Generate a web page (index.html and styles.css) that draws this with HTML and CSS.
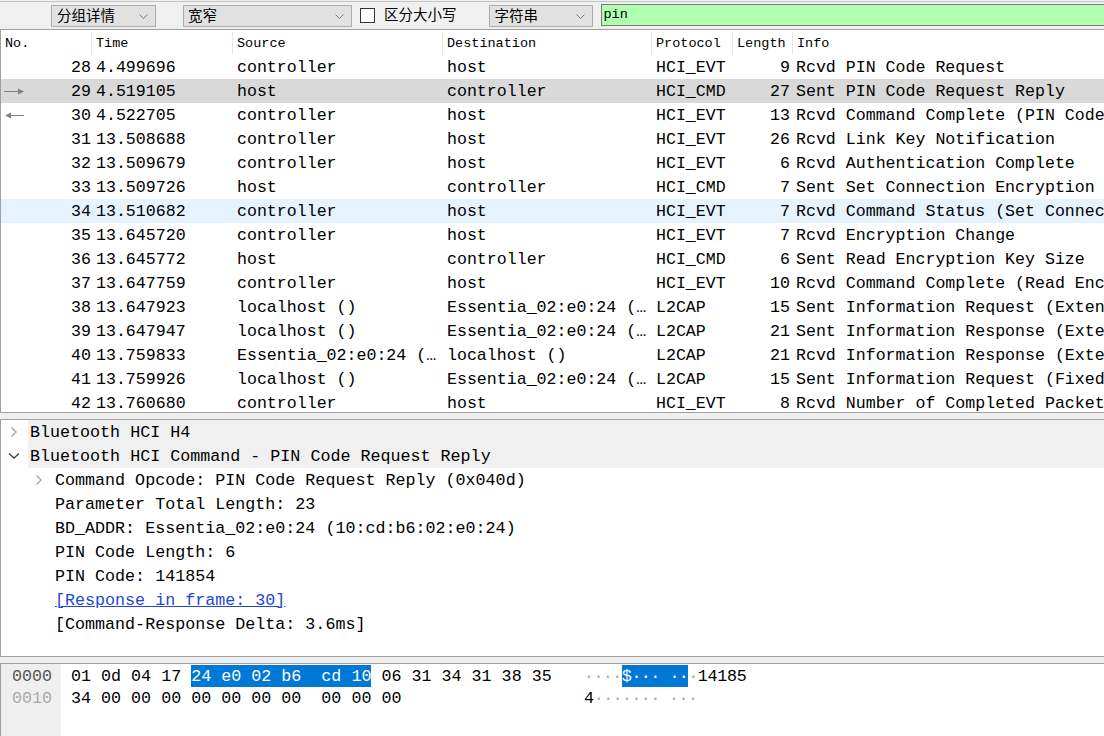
FILE: index.html
```html
<!DOCTYPE html>
<html lang="zh">
<head>
<meta charset="utf-8">
<title>Wireshark</title>
<link rel="stylesheet" href="styles.css">
</head>
<body>
<div class="app">
  <div class="toolbar">
    <div class="combo c1"><span>分组详情</span><svg class="chev" width="9" height="5" viewBox="0 0 9 5"><polyline points="0.5,0.5 4.5,4.5 8.5,0.5" fill="none" stroke="#7a7a7a" stroke-width="1"/></svg></div>
    <div class="combo c2"><span>宽窄</span><svg class="chev" width="9" height="5" viewBox="0 0 9 5"><polyline points="0.5,0.5 4.5,4.5 8.5,0.5" fill="none" stroke="#7a7a7a" stroke-width="1"/></svg></div>
    <div class="check"></div>
    <span class="check-label">区分大小写</span>
    <div class="combo c3"><span>字符串</span><svg class="chev" width="9" height="5" viewBox="0 0 9 5"><polyline points="0.5,0.5 4.5,4.5 8.5,0.5" fill="none" stroke="#7a7a7a" stroke-width="1"/></svg></div>
    <div class="search">pin</div>
  </div>

  <div class="plist">
    <div class="prow head">
      <div class="c sep">No.</div>
      <div class="c sep">Time</div>
      <div class="c sep">Source</div>
      <div class="c sep">Destination</div>
      <div class="c sep">Protocol</div>
      <div class="c sep">Length</div>
      <div class="c">Info</div>
    </div>
    <div class="prow"><div class="c no">28</div><div class="c">4.499696</div><div class="c">controller</div><div class="c">host</div><div class="c">HCI_EVT</div><div class="c len">9</div><div class="c info">Rcvd PIN Code Request</div></div>
    <div class="prow sel"><div class="c no"><svg width="22" height="7" viewBox="0 0 22 7"><line x1="1" y1="3.5" x2="20" y2="3.5" stroke="#808080" stroke-width="1"/><polygon points="15,0.5 21,3.5 15,6.5" fill="#808080"/></svg><span>29</span></div><div class="c">4.519105</div><div class="c">host</div><div class="c">controller</div><div class="c">HCI_CMD</div><div class="c len">27</div><div class="c info">Sent PIN Code Request Reply</div></div>
    <div class="prow"><div class="c no"><svg width="22" height="7" viewBox="0 0 22 7"><line x1="3" y1="3.5" x2="21" y2="3.5" stroke="#808080" stroke-width="1"/><polygon points="8,0.5 2,3.5 8,6.5" fill="#808080"/></svg><span>30</span></div><div class="c">4.522705</div><div class="c">controller</div><div class="c">host</div><div class="c">HCI_EVT</div><div class="c len">13</div><div class="c info">Rcvd Command Complete (PIN Code Request Reply)</div></div>
    <div class="prow"><div class="c no">31</div><div class="c">13.508688</div><div class="c">controller</div><div class="c">host</div><div class="c">HCI_EVT</div><div class="c len">26</div><div class="c info">Rcvd Link Key Notification</div></div>
    <div class="prow"><div class="c no">32</div><div class="c">13.509679</div><div class="c">controller</div><div class="c">host</div><div class="c">HCI_EVT</div><div class="c len">6</div><div class="c info">Rcvd Authentication Complete</div></div>
    <div class="prow"><div class="c no">33</div><div class="c">13.509726</div><div class="c">host</div><div class="c">controller</div><div class="c">HCI_CMD</div><div class="c len">7</div><div class="c info">Sent Set Connection Encryption</div></div>
    <div class="prow hover"><div class="c no">34</div><div class="c">13.510682</div><div class="c">controller</div><div class="c">host</div><div class="c">HCI_EVT</div><div class="c len">7</div><div class="c info">Rcvd Command Status (Set Connection Encryption)</div></div>
    <div class="prow"><div class="c no">35</div><div class="c">13.645720</div><div class="c">controller</div><div class="c">host</div><div class="c">HCI_EVT</div><div class="c len">7</div><div class="c info">Rcvd Encryption Change</div></div>
    <div class="prow"><div class="c no">36</div><div class="c">13.645772</div><div class="c">host</div><div class="c">controller</div><div class="c">HCI_CMD</div><div class="c len">6</div><div class="c info">Sent Read Encryption Key Size</div></div>
    <div class="prow"><div class="c no">37</div><div class="c">13.647759</div><div class="c">controller</div><div class="c">host</div><div class="c">HCI_EVT</div><div class="c len">10</div><div class="c info">Rcvd Command Complete (Read Encryption Key Size)</div></div>
    <div class="prow"><div class="c no">38</div><div class="c">13.647923</div><div class="c">localhost ()</div><div class="c">Essentia_02:e0:24 (10:cd:b6:02:e0:24)</div><div class="c">L2CAP</div><div class="c len">15</div><div class="c info">Sent Information Request (Extended Features Mask)</div></div>
    <div class="prow"><div class="c no">39</div><div class="c">13.647947</div><div class="c">localhost ()</div><div class="c">Essentia_02:e0:24 (10:cd:b6:02:e0:24)</div><div class="c">L2CAP</div><div class="c len">21</div><div class="c info">Sent Information Response (Extended Features Mask)</div></div>
    <div class="prow"><div class="c no">40</div><div class="c">13.759833</div><div class="c">Essentia_02:e0:24 (10:cd:b6:02:e0:24)</div><div class="c">localhost ()</div><div class="c">L2CAP</div><div class="c len">21</div><div class="c info">Rcvd Information Response (Extended Features Mask)</div></div>
    <div class="prow"><div class="c no">41</div><div class="c">13.759926</div><div class="c">localhost ()</div><div class="c">Essentia_02:e0:24 (10:cd:b6:02:e0:24)</div><div class="c">L2CAP</div><div class="c len">15</div><div class="c info">Sent Information Request (Fixed Channels Supported)</div></div>
    <div class="prow"><div class="c no">42</div><div class="c">13.760680</div><div class="c">controller</div><div class="c">host</div><div class="c">HCI_EVT</div><div class="c len">8</div><div class="c info">Rcvd Number of Completed Packets</div></div>
  </div>

  <div class="splitter"></div>

  <div class="details">
    <div class="drow l1"><span class="tw"><svg width="12" height="12" viewBox="0 0 12 12"><polyline points="3.5,1.5 8,6 3.5,10.5" fill="none" stroke="#a6a6a6" stroke-width="1.4"/></svg></span><span class="dt top">Bluetooth HCI H4</span></div>
    <div class="drow l1"><span class="tw"><svg width="12" height="12" viewBox="0 0 12 12"><polyline points="1,3.5 6,8 11,3.5" fill="none" stroke="#404040" stroke-width="1.4"/></svg></span><span class="dt top">Bluetooth HCI Command - PIN Code Request Reply</span></div>
    <div class="drow l2"><span class="tw"><svg width="12" height="12" viewBox="0 0 12 12"><polyline points="3.5,1.5 8,6 3.5,10.5" fill="none" stroke="#a6a6a6" stroke-width="1.4"/></svg></span><span class="dt">Command Opcode: PIN Code Request Reply (0x040d)</span></div>
    <div class="drow l2"><span class="tw"></span><span class="dt">Parameter Total Length: 23</span></div>
    <div class="drow l2"><span class="tw"></span><span class="dt">BD_ADDR: Essentia_02:e0:24 (10:cd:b6:02:e0:24)</span></div>
    <div class="drow l2"><span class="tw"></span><span class="dt">PIN Code Length: 6</span></div>
    <div class="drow l2"><span class="tw"></span><span class="dt">PIN Code: 141854</span></div>
    <div class="drow l2"><span class="tw"></span><span class="dt"><a class="link" href="#">[Response in frame: 30]</a></span></div>
    <div class="drow l2"><span class="tw"></span><span class="dt">[Command-Response Delta: 3.6ms]</span></div>
  </div>

  <div class="splitter"></div>

  <div class="hex">
    <div class="gutter">
      <div class="hl off1">0000</div>
      <div class="hl off2">0010</div>
    </div>
    <div class="bytes">
      <div class="hl"><span class="hexpart">01 0d 04 17 <span class="hs">24 e0 02 b6  cd 10</span> 06 31 34 31 38 35</span><span class="ascii"><span class="dot">····</span><span class="hs">$<span class="wdot">···</span> <span class="wdot">··</span></span><span class="dot">·</span>14185</span></div>
      <div class="hl"><span class="hexpart">34 00 00 00 00 00 00 00  00 00 00</span><span class="ascii">4<span class="dot">······· ···</span></span></div>
    </div>
  </div>
</div>
</body>
</html>
```

FILE: styles.css
```css
html, body {
  margin: 0;
  padding: 0;
  width: 1104px;
  height: 736px;
  overflow: hidden;
  background: #f0f0f0;
}

.app {
  display: flex;
  flex-direction: column;
  height: 736px;
  font-family: "Liberation Mono", "DejaVu Sans Mono", monospace;
  font-size: 16.6px;
  color: #000;
}

/* toolbar */
.toolbar {
  margin-top: 1px;
  border-top: 1px solid #c4c4c4;
  height: 27px;
  flex: none;
  display: flex;
  align-items: flex-start;
  padding-left: 51px;
  font-family: "Noto Sans CJK SC", "Microsoft YaHei", sans-serif;
  font-size: 14.5px;
  color: #000;
}

.combo {
  box-sizing: border-box;
  margin-top: 3px;
  height: 22px;
  background: #e1e1e1;
  border: 1px solid #adadad;
  display: flex;
  align-items: center;
  justify-content: space-between;
  padding: 0 7px 0 5px;
  line-height: 20px;
}
.combo span { position: relative; top: -1px; }
.c1 { width: 105px; }
.c2 { width: 169px; margin-left: 27px; padding-left: 4px; }
.c3 { width: 104px; margin-left: 32px; }
.chev { display: block; }

.check {
  box-sizing: border-box;
  width: 15px;
  height: 15px;
  margin: 6px 0 0 8px;
  background: #fff;
  border: 1px solid #333;
}
.check-label {
  margin-left: 9px;
  line-height: 26px;
  position: relative;
  top: -1px;
}

.search {
  flex: 1;
  margin-left: 8px;
  margin-right: -6px;
  margin-top: 2px;
  height: 22px;
  box-sizing: border-box;
  background: #afffaf;
  border: 1px solid #7a7a7a;
  border-right: none;
  padding-left: 2px;
  font-family: "Liberation Mono", monospace;
  font-size: 13.5px;
  line-height: 20px;
}

/* packet list */
.plist {
  box-sizing: border-box;
  height: 384px;
  background: #fff;
  border: 1px solid #a0a0a0;
  border-right: none;
  padding-top: 1px;
  overflow: hidden;
  flex: none;
}
.prow {
  display: grid;
  grid-template-columns: 91px 141px 210px 209px 81px 60px 1fr;
  height: 24px;
}
.prow .c {
  box-sizing: border-box;
  height: 24px;
  padding-left: 4px;
  padding-top: 2px;
  line-height: 22px;
  white-space: nowrap;
  overflow: hidden;
  text-overflow: ellipsis;
}
.prow.head {
  font-size: 13.5px;
}
.prow.head .c {
  height: 22px;
  margin: 1px 0;
  padding-top: 1px;
  line-height: 21px;
}
.prow.head .c.sep {
  border-right: 1px solid #e5e5e5;
}
.prow .c.no {
  display: flex;
  align-items: center;
  justify-content: flex-end;
  padding: 2px 1px 0 2px;
}
.prow .c.no svg { margin-right: auto; display: block; margin-top: -2px; }
.prow .c.len {
  text-align: right;
  padding-left: 0;
  padding-right: 3px;
}
.prow .c.info {
  text-overflow: clip;
  padding-left: 3px;
}
.prow.sel { background: #d9d9d9; }
.prow.hover { background: #e5f3ff; }

.splitter {
  height: 6px;
  flex: none;
}

/* details */
.details {
  box-sizing: border-box;
  height: 238px;
  flex: none;
  background: #fff;
  border: 1px solid #a0a0a0;
  border-right: none;
  overflow: hidden;
  font-size: 16.7px;
}
.drow {
  display: flex;
  height: 24px;
  white-space: nowrap;
}
.drow.l1 { padding-left: 4px; }
.drow.l2 { padding-left: 29px; }
.tw {
  width: 23px;
  flex: none;
  display: flex;
  align-items: center;
}
.tw svg { display: block; margin-left: 3px; }
.dt {
  flex: 1;
  box-sizing: border-box;
  padding-left: 2px;
  padding-top: 2px;
  line-height: 21px;
}
.dt.top { background: #f0f0f0; }
.link {
  color: #2346d3;
  text-decoration: underline;
}

/* hex */
.hex {
  flex: 1;
  display: flex;
  background: #fff;
  border: 1px solid #a0a0a0;
  border-right: none;
  border-bottom: none;
  font-size: 16.7px;
}
.gutter {
  width: 60px;
  flex: none;
  background: #efefef;
  padding-left: 11px;
  box-sizing: border-box;
}
.hl {
  box-sizing: border-box;
  height: 22px;
  padding-top: 3px;
  line-height: 19px;
  white-space: pre;
}
.off1 { color: #555; }
.off2 { color: #a8a8a8; }
.bytes { padding-left: 10px; }
.hexpart {
  display: inline-block;
  width: 513px;
}
.ascii { letter-spacing: -0.25px; }
.hs {
  background: #0078d7;
  color: #fff;
  padding: 2px 0 1px 0;
}
.dot { color: #a8a8a8; letter-spacing: -0.6px; }
.wdot { color: #fff; letter-spacing: -0.6px; }
```
